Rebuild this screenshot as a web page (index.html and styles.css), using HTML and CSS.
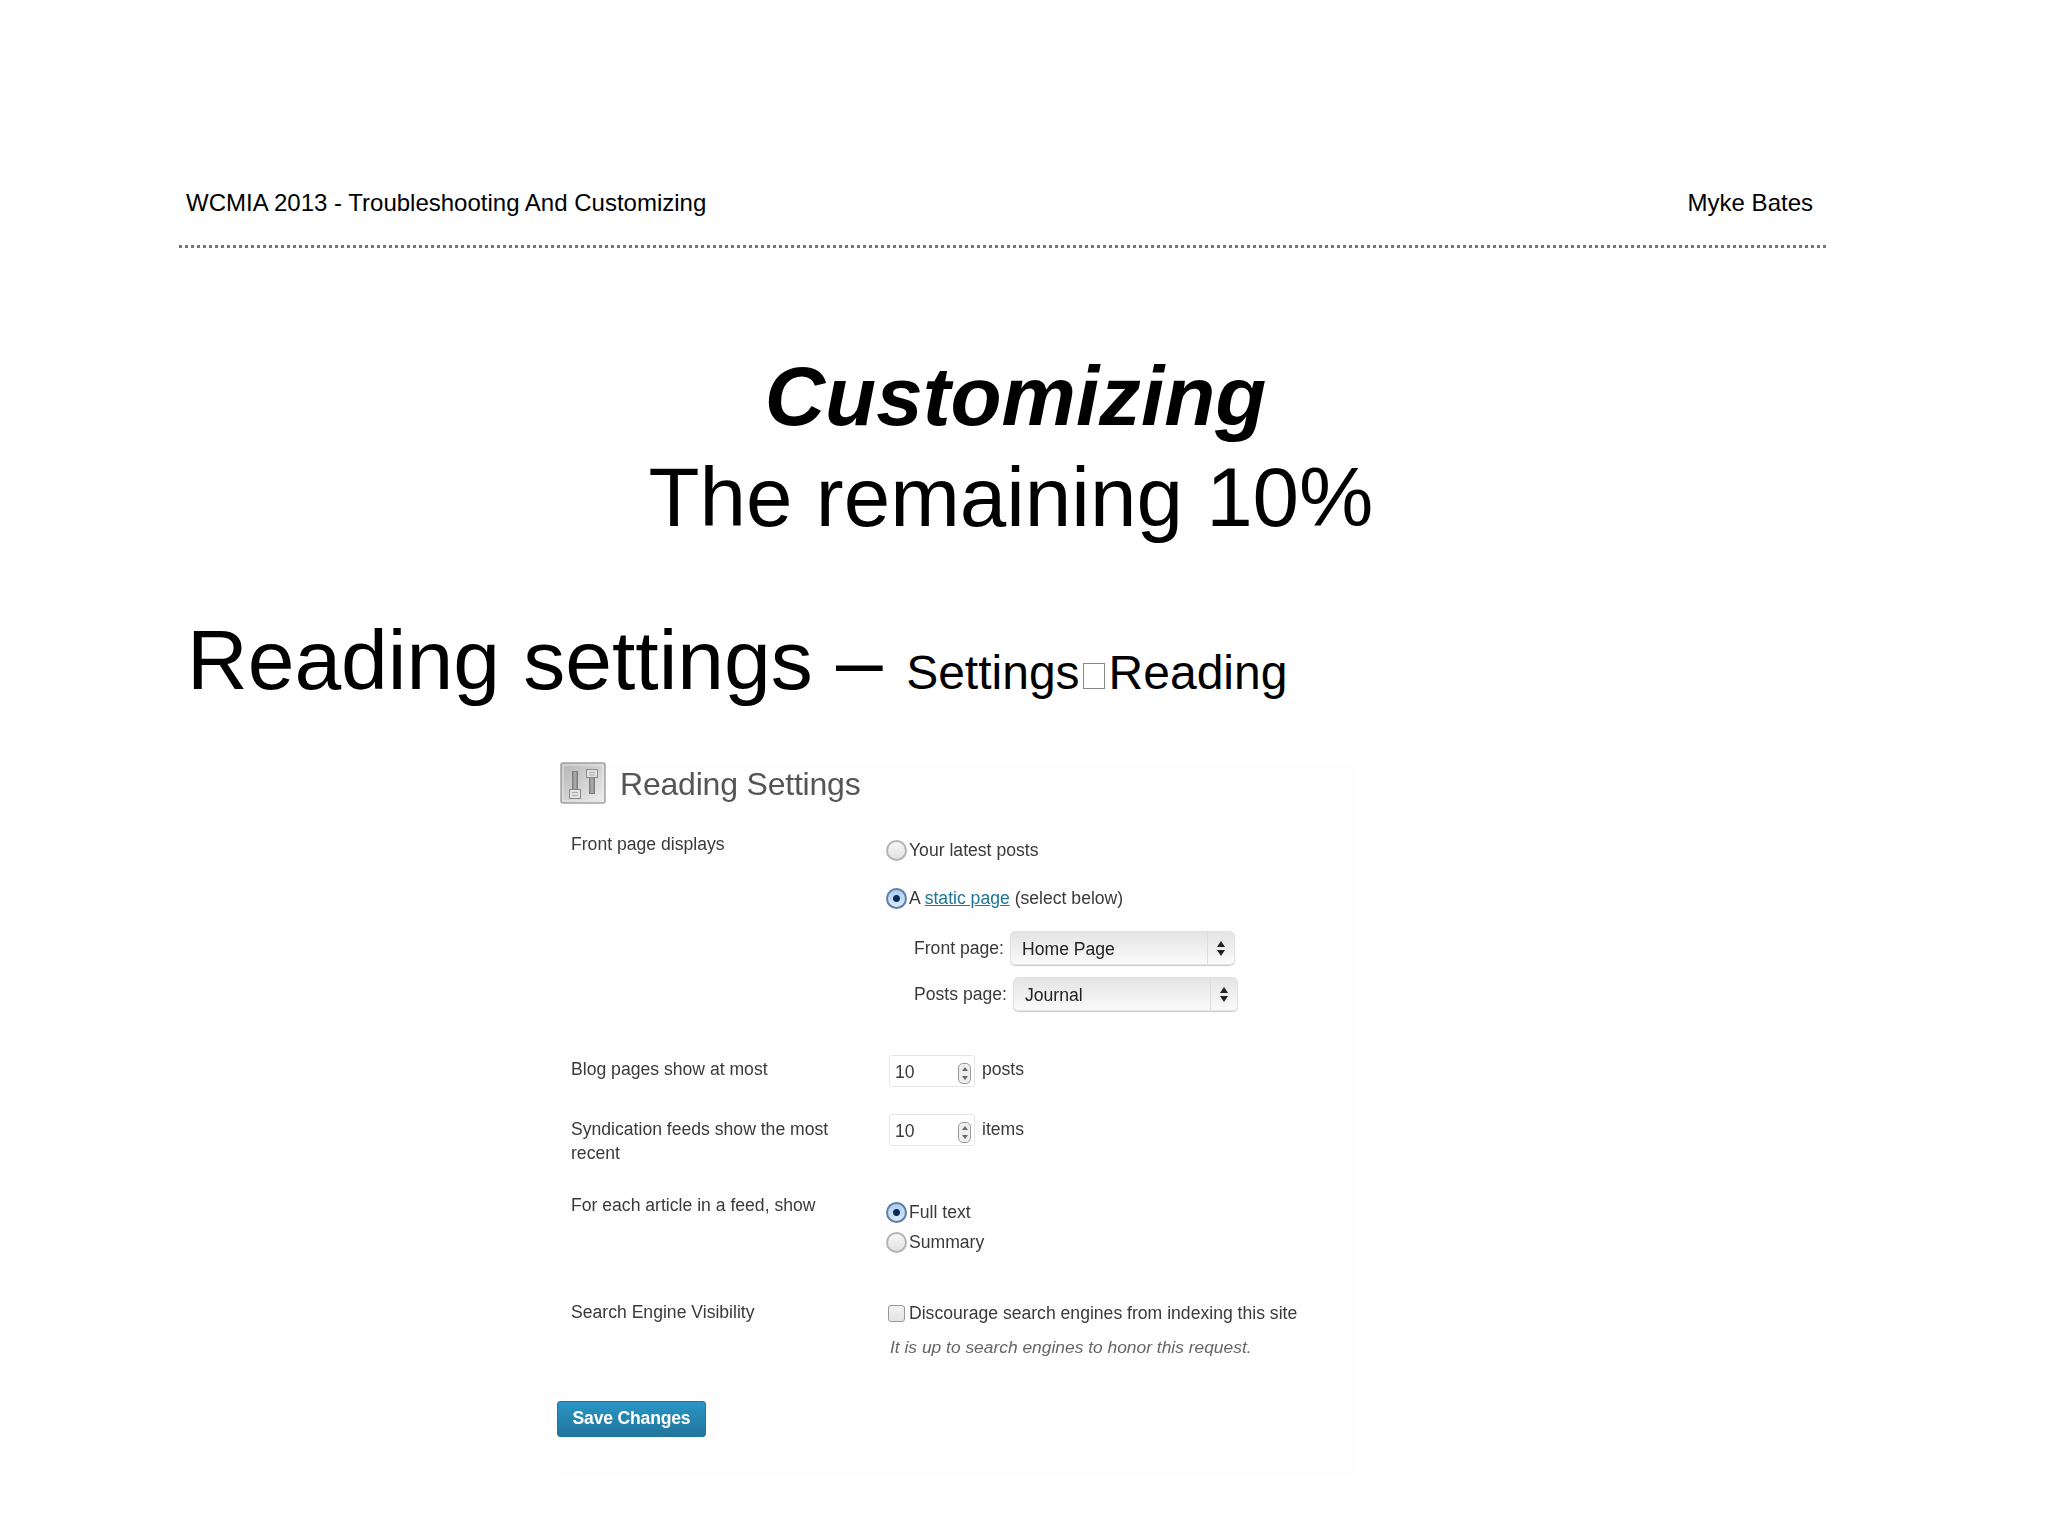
FILE: index.html
```html
<!DOCTYPE html>
<html lang="en">
<head>
    <meta charset="UTF-8">
    <meta name="viewport" content="width=device-width, initial-scale=1.0">
    <title>Customizing - The remaining 10%</title>
    <link rel="stylesheet" href="styles.css">
</head>
<body>
    <div class="running-head">
        <span>WCMIA 2013 - Troubleshooting And Customizing</span>
        <span>Myke Bates</span>
    </div>
    <div class="rule"></div>

    <div class="title-block">
        <h1>Customizing</h1>
        <p>The remaining 10%</p>
    </div>

    <h2 class="section-title">Reading settings – <small>Settings<span class="tofu"></span>Reading</small></h2>

    <div class="shot">
        <div class="shot-head">
            <svg class="settings-icon" width="46" height="42" viewBox="0 0 46 42">
                <defs>
                    <linearGradient id="iconBg" x1="0" y1="0" x2="1" y2="1">
                        <stop offset="0" stop-color="#b4b4b4"/>
                        <stop offset="1" stop-color="#efefef"/>
                    </linearGradient>
                </defs>
                <rect x="1" y="1" width="44" height="40" rx="2" fill="url(#iconBg)" stroke="#a2a2a2" stroke-width="1.500"/>
                <rect x="3" y="3" width="40" height="36" fill="none" stroke="#e8e8e8"/>
                <rect x="12" y="9" width="6" height="20" fill="#7f7f7f"/>
                <rect x="13.500" y="10" width="3" height="18" fill="#a8a8a8"/>
                <rect x="9.500" y="27.500" width="11" height="9" fill="#e2e2e2" stroke="#8a8a8a"/>
                <path d="M12 30.500h6M12 33.500h6" stroke="#aaa" fill="none"/>
                <rect x="29" y="12" width="6" height="20" fill="#7f7f7f"/>
                <rect x="30.500" y="14" width="3" height="17" fill="#a8a8a8"/>
                <rect x="26.500" y="7.500" width="11" height="8" fill="#e2e2e2" stroke="#8a8a8a"/>
                <path d="M29 10.500h6M29 13h6" stroke="#aaa" fill="none"/>
            </svg>
            <span class="shot-title">Reading Settings</span>
        </div>

        <div class="row row-front">
            <div class="row-label">Front page displays</div>
            <div class="row-body">
                <div class="choice"><span class="radio"></span><span>Your latest posts</span></div>
                <div class="choice choice-static"><span class="radio on"></span><span>A <a href="#">static page</a> (select below)</span></div>
                <div class="page-pick">
                    <span class="pick-label">Front page:</span>
                    <span class="select">Home Page<span class="select-arrows"></span></span>
                </div>
                <div class="page-pick page-pick-posts">
                    <span class="pick-label">Posts page:</span>
                    <span class="select">Journal<span class="select-arrows"></span></span>
                </div>
            </div>
        </div>

        <div class="row row-blog">
            <div class="row-label">Blog pages show at most</div>
            <div class="row-body number-row">
                <span class="number">10<span class="stepper"></span></span>
                <span class="unit">posts</span>
            </div>
        </div>

        <div class="row row-feeds">
            <div class="row-label">Syndication feeds show the most recent</div>
            <div class="row-body number-row">
                <span class="number">10<span class="stepper"></span></span>
                <span class="unit">items</span>
            </div>
        </div>

        <div class="row row-article">
            <div class="row-label">For each article in a feed, show</div>
            <div class="row-body">
                <div class="choice"><span class="radio on"></span><span>Full text</span></div>
                <div class="choice choice-summary"><span class="radio"></span><span>Summary</span></div>
            </div>
        </div>

        <div class="row row-search">
            <div class="row-label">Search Engine Visibility</div>
            <div class="row-body">
                <div class="check-line"><span class="checkbox"></span><span>Discourage search engines from indexing this site</span></div>
                <div class="hint">It is up to search engines to honor this request.</div>
            </div>
        </div>

        <button class="save-btn" type="button">Save Changes</button>
    </div>
</body>
</html>
```

FILE: styles.css
```css
* {
    margin: 0;
    padding: 0;
    box-sizing: border-box;
}

body {
    width: 2048px;
    height: 1536px;
    overflow: hidden;
    background: #fff;
    color: #000;
    font-family: "Liberation Sans", Arial, sans-serif;
}

/* slide header */
.running-head {
    display: flex;
    justify-content: space-between;
    margin: 187px 235px 0 186px;
    font-size: 24px;
    line-height: 32px;
}

.rule {
    width: 1647px;
    margin: 26px 0 0 179px;
    border-top: 3px dotted #777;
}

/* slide titles */
.title-block {
    width: 2022px;
    margin-top: 98px;
    text-align: center;
    font-size: 83.600px;
    line-height: 101px;
}

.title-block h1 {
    padding-left: 9px;
    font-size: 83.600px;
    font-style: italic;
    font-weight: 700;
}

.section-title {
    margin: 62px 0 0 187px;
    font-size: 84px;
    font-weight: 400;
    line-height: 101px;
}

.section-title small {
    font-size: 48px;
}

.tofu {
    display: inline-block;
    width: 22px;
    height: 26px;
    margin: 0 3.500px;
    border: 1px solid #888;
    vertical-align: 0;
}

/* the embedded screenshot of the settings page */
.shot {
    width: 800px;
    margin: 39px 0 0 557px;
    padding-bottom: 40px;
    background: #fefefe;
    color: #3a3a3a;
    font-size: 17.600px;
    filter: blur(0.35px);
}

.shot-head {
    display: flex;
    align-items: center;
    gap: 14px;
    margin-left: 3px;
    height: 42px;
}

.shot-title {
    padding-top: 2px;
    font-size: 32px;
    letter-spacing: -0.2px;
    color: #555;
}

.row {
    display: flex;
    margin-left: 14px;
}

.row-label {
    width: 315px;
    padding-right: 40px;
    line-height: 24px;
}

.row-body {
    flex: 1;
}

.row-front {
    margin-top: 28px;
}

.row-blog {
    margin-top: 46px;
}

.row-feeds {
    margin-top: 30px;
}

.row-article {
    margin-top: 28px;
}

.row-search {
    margin-top: 45px;
}

.choice {
    display: flex;
    align-items: center;
    gap: 2px;
    height: 24px;
    margin-top: 6px;
}

.row-article .choice {
    margin-top: 8px;
}

.choice-static {
    margin-top: 24px;
}

.row-article .choice-summary {
    margin-top: 6px;
}

.choice a {
    color: #21759b;
}

.radio {
    flex: none;
    width: 21px;
    height: 21px;
    border: 2px solid #b4b4b4;
    border-radius: 50%;
    background: linear-gradient(#f6f6f6, #e2e2e2);
}

.radio.on {
    border-color: #5d7ea6;
    background: radial-gradient(circle, #0b2a55 0 3px, transparent 4px), linear-gradient(#a9cdf0, #dceafa);
}

.page-pick {
    display: flex;
    align-items: center;
    height: 34px;
    margin: 21px 0 0 28px;
}

.page-pick-posts {
    margin-top: 12px;
}

.pick-label {
    margin-right: 6px;
}

.select {
    position: relative;
    display: block;
    width: 225px;
    height: 34px;
    padding-left: 11px;
    line-height: 34px;
    color: #222;
    border: 1px solid #e2e2e2;
    border-radius: 5px;
    background: linear-gradient(#e4e4e4, #fafafa);
    box-shadow: 0 1px 1px #ccc;
}

.select-arrows {
    position: absolute;
    top: 0;
    right: 0;
    width: 27px;
    height: 32px;
    border-left: 1px solid #ddd;
}

.select-arrows::before,
.select-arrows::after {
    content: "";
    position: absolute;
    left: 9px;
    border-left: 4px solid transparent;
    border-right: 4px solid transparent;
}

.select-arrows::before {
    top: 9px;
    border-bottom: 6px solid #222;
}

.select-arrows::after {
    top: 18px;
    border-top: 6px solid #222;
}

.number-row {
    display: flex;
    padding-left: 3px;
}

.number {
    position: relative;
    display: block;
    width: 86px;
    height: 32px;
    margin-top: -2.500px;
    padding-left: 5px;
    line-height: 32px;
    border: 1px solid #e6e6e6;
    border-radius: 3px;
    background: #fff;
}

.stepper {
    position: absolute;
    top: 7px;
    right: 3px;
    width: 13px;
    height: 21px;
    border: 1px solid #999;
    border-radius: 5px;
    background: #eee;
}

.stepper::before,
.stepper::after {
    content: "";
    position: absolute;
    left: 2.500px;
    border-left: 3px solid transparent;
    border-right: 3px solid transparent;
}

.stepper::before {
    top: 3px;
    border-bottom: 4px solid #666;
}

.stepper::after {
    bottom: 3px;
    border-top: 4px solid #666;
}

.unit {
    margin-left: 7px;
    line-height: 24px;
}

.check-line {
    display: flex;
    align-items: center;
    gap: 4px;
    padding-left: 2px;
    height: 24px;
    margin-top: 2px;
}

.checkbox {
    flex: none;
    width: 17px;
    height: 17px;
    border: 1px solid #999;
    border-radius: 3px;
    background: linear-gradient(#f2f2f2, #e4e4e4);
}

.hint {
    margin: 9px 0 0 4px;
    font-size: 17.400px;
    font-style: italic;
    color: #666;
    line-height: 24px;
}

.save-btn {
    display: block;
    width: 149px;
    height: 36px;
    margin-top: 42px;
    border: 1px solid #21759b;
    border-radius: 3px;
    background: linear-gradient(#2a95c5, #21759b);
    color: #fff;
    font-family: inherit;
    font-size: 17.600px;
    font-weight: 700;
    letter-spacing: -0.2px;
}
```
